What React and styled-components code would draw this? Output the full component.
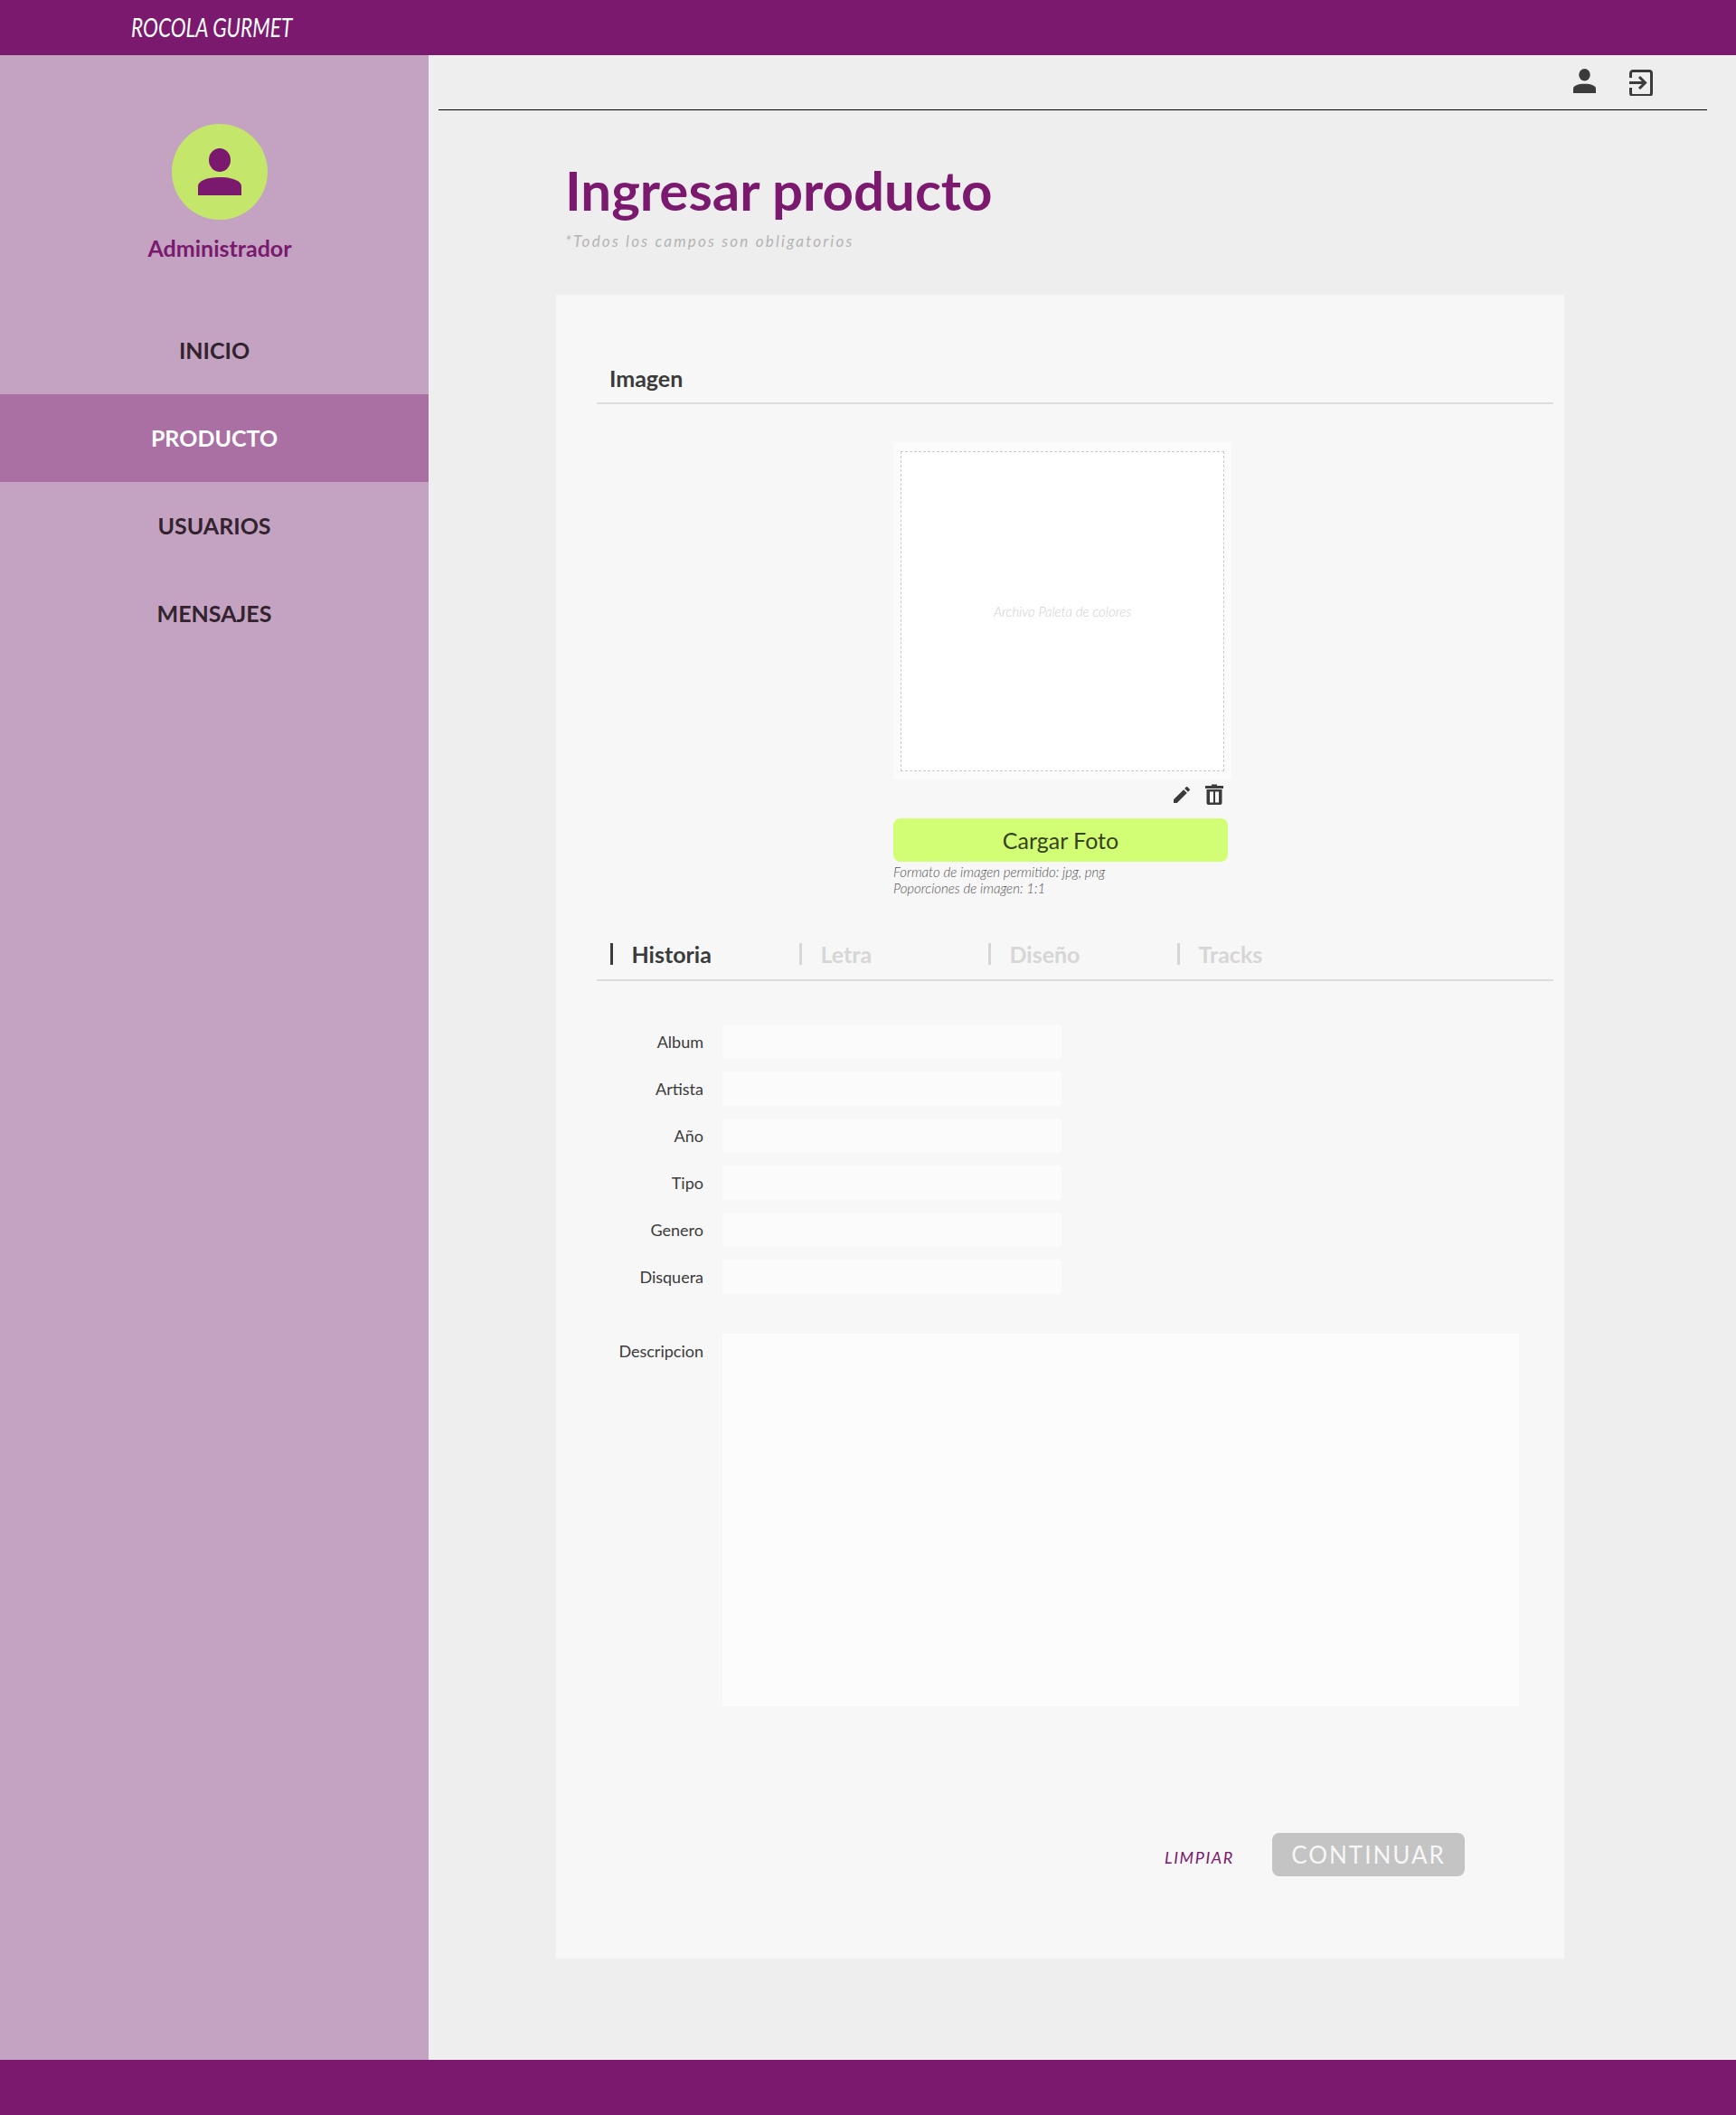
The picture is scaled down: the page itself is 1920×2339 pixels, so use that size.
import { MdEdit } from "react-icons/md";
import styled, { createGlobalStyle } from "styled-components";

const PURPLE = "#7a196e";
const DARK = "#3b3b3b";

const fields = ["Album", "Artista", "Año", "Tipo", "Genero", "Disquera"];
const tabs = ["Historia", "Letra", "Diseño", "Tracks"];
const menu = ["INICIO", "PRODUCTO", "USUARIOS", "MENSAJES"];

function PersonIcon({ size, color }) {
  return (
    <svg width={size} height={(size * 52) / 48} viewBox="0 0 48 52" fill={color}>
      <ellipse cx="24" cy="13" rx="12" ry="13" />
      <path d="M0 52V42C0 36 10 32 24 32s24 4 24 10v10z" />
    </svg>
  );
}

function ExitIcon() {
  return (
    <svg width="26" height="30" viewBox="0 0 26 30" fill="none" stroke={DARK} strokeWidth="3">
      <path d="M1.500 10V5a2.500 2.500 0 0 1 2.500-2.500h18A2.500 2.500 0 0 1 24.500 5v22a2.500 2.500 0 0 1-2.500 2.500H4A2.500 2.500 0 0 1 1.500 27v-6" />
      <path d="M0 15.500h17M11 9l6.500 6.500L11 22" />
    </svg>
  );
}

function TrashIcon() {
  return (
    <svg width="20" height="23" viewBox="0 0 20 23" fill={DARK}>
      <path d="M0 2h7V0.500h6V2h7v3H0z" />
      <path fillRule="evenodd" d="M1.500 6h17v15c0 1.200-.8 2-2 2h-13c-1.200 0-2-.8-2-2zm3.500 2.500v12h4v-12zm6 0v12h4v-12z" />
    </svg>
  );
}

export default function App() {
  return (
    <>
      <GlobalStyle />
      <Page>
        <Header>
          <Brand>ROCOLA GURMET</Brand>
        </Header>
        <Middle>
          <Sidebar>
            <Avatar>
              <PersonIcon size={48} color={PURPLE} />
            </Avatar>
            <Role>Administrador</Role>
            <Menu>
              {menu.map((item) => (
                <MenuItem key={item} $active={item === "PRODUCTO"}>
                  {item}
                </MenuItem>
              ))}
            </Menu>
          </Sidebar>
          <Main>
            <Toolbar>
              <PersonIcon size={25} color={DARK} />
              <ExitIcon />
            </Toolbar>
            <Title>Ingresar producto</Title>
            <Subtitle>*Todos los campos son obligatorios</Subtitle>
            <Card>
              <SectionTitle>Imagen</SectionTitle>
              <ImageColumn>
                <ImageFrame>
                  <DropZone>Archivo Paleta de colores</DropZone>
                </ImageFrame>
                <ImageActions>
                  <MdEdit size={24} color={DARK} />
                  <TrashIcon />
                </ImageActions>
                <UploadButton>Cargar Foto</UploadButton>
                <Hint>
                  Formato de imagen permitido: jpg, png
                  <br />
                  Poporciones de imagen: 1:1
                </Hint>
              </ImageColumn>
              <Tabs>
                {tabs.map((tab, idx) => (
                  <Tab key={tab} $active={idx === 0}>
                    {tab}
                  </Tab>
                ))}
              </Tabs>
              <Fields>
                {fields.map((field) => (
                  <FieldRow key={field}>
                    <FieldLabel>{field}</FieldLabel>
                    <Input />
                  </FieldRow>
                ))}
              </Fields>
              <AreaRow>
                <FieldLabel>Descripcion</FieldLabel>
                <Textarea />
              </AreaRow>
              <Actions>
                <ClearLink>LIMPIAR</ClearLink>
                <ContinueButton>CONTINUAR</ContinueButton>
              </Actions>
            </Card>
          </Main>
        </Middle>
        <Footer />
      </Page>
    </>
  );
}

const GlobalStyle = createGlobalStyle`
  * {
    box-sizing: border-box;
  }

  body {
    margin: 0;
    background: #eeeeee;
    font-family: Lato, "Liberation Sans", sans-serif;
  }
`;

const Page = styled.div`
  display: flex;
  flex-direction: column;
  height: 2339px;
`;

const Header = styled.header`
  height: 61px;
  padding: 0 0 2px 145px;
  display: flex;
  align-items: center;
  background: ${PURPLE};
`;

const Brand = styled.div`
  font-size: 29px;
  font-weight: 400;
  font-style: italic;
  color: #ffffff;
  transform: scaleX(0.78);
  transform-origin: left center;
  white-space: nowrap;
`;

const Middle = styled.div`
  flex: 1;
  display: flex;
  min-height: 0;
`;

const Sidebar = styled.aside`
  width: 474px;
  padding-top: 76px;
  display: flex;
  flex-direction: column;
  background: #c3a3c1;
`;

const Avatar = styled.div`
  width: 106px;
  height: 106px;
  margin-left: 190px;
  display: flex;
  align-items: center;
  justify-content: center;
  border-radius: 50%;
  background: #c4e66b;
`;

const Role = styled.div`
  margin-top: 16px;
  width: 486px;
  text-align: center;
  font-size: 25px;
  font-weight: 700;
  color: ${PURPLE};
`;

const Menu = styled.nav`
  margin-top: 50px;
  display: flex;
  flex-direction: column;
`;

const MenuItem = styled.div`
  height: 97px;
  padding-bottom: 1px;
  display: flex;
  align-items: center;
  justify-content: center;
  font-size: 25px;
  font-weight: 700;
  color: ${(props) => (props.$active ? "#ffffff" : "#33232f")};
  background: ${(props) => (props.$active ? "#aa6fa3" : "transparent")};
`;

const Main = styled.main`
  flex: 1;
  padding: 0 32px 0 11px;
`;

const Toolbar = styled.div`
  height: 61px;
  padding: 15px 60px 0 0;
  display: flex;
  align-items: flex-start;
  justify-content: flex-end;
  gap: 37px;
  border-bottom: 1px solid #000000;
`;

const Title = styled.h1`
  margin: 52px 0 0 140px;
  font-size: 60px;
  line-height: 72px;
  font-weight: 700;
  color: ${PURPLE};
`;

const Subtitle = styled.div`
  margin: 10px 0 0 140px;
  font-size: 17px;
  line-height: 22px;
  font-style: italic;
  letter-spacing: 2.22px;
  color: #b4b4b4;
`;

const Card = styled.section`
  width: 1115px;
  height: 1840px;
  margin: 48px 0 0 130px;
  padding: 72px 12px 0 45px;
  display: flex;
  flex-direction: column;
  background: #f7f7f7;
`;

const SectionTitle = styled.h2`
  margin: 0;
  height: 49px;
  padding: 5px 0 0 14px;
  font-size: 25px;
  line-height: 30px;
  font-weight: 700;
  color: ${DARK};
  border-bottom: 2px solid #dddddd;
`;

const ImageColumn = styled.div`
  width: 374px;
  margin: 42px 0 0 328px;
  display: flex;
  flex-direction: column;
`;

const ImageFrame = styled.div`
  height: 372px;
  padding: 10px 8px 8px;
  background: #fbfbfb;
`;

const DropZone = styled.div`
  height: 100%;
  display: flex;
  align-items: center;
  justify-content: center;
  background: #ffffff;
  border: 1px dashed #c8c8c8;
  font-size: 15px;
  font-weight: 300;
  font-style: italic;
  color: #cfcfcf;
`;

const ImageActions = styled.div`
  height: 44px;
  padding: 0 9px 9px 0;
  display: flex;
  align-items: center;
  justify-content: flex-end;
  gap: 14px;
`;

const UploadButton = styled.button`
  width: 370px;
  height: 48px;
  border: none;
  border-radius: 8px;
  font-family: inherit;
  font-size: 25px;
  color: #37421f;
  background: #d2fe76;
`;

const Hint = styled.div`
  margin-top: 2px;
  font-size: 15px;
  line-height: 18px;
  font-weight: 300;
  font-style: italic;
  color: #555555;
`;

const Tabs = styled.div`
  height: 47px;
  margin-top: 47px;
  display: flex;
  border-bottom: 2px solid #dddddd;
`;

const Tab = styled.div`
  width: 209px;
  height: 25px;
  margin-top: 4px;
  padding-left: 15px;
  display: flex;
  align-items: center;
  font-size: 25px;
  font-weight: 700;
  color: ${(props) => (props.$active ? DARK : "#d6d6d6")};

  &::before {
    content: "";
    width: 3px;
    height: 24px;
    margin-right: 20.500px;
    background: ${(props) => (props.$active ? DARK : "#d6d6d6")};
  }
`;

const Fields = styled.div`
  margin-top: 48px;
  display: flex;
  flex-direction: column;
  gap: 14px;
`;

const FieldRow = styled.div`
  display: flex;
  align-items: center;
  gap: 21px;
`;

const FieldLabel = styled.label`
  width: 118px;
  text-align: right;
  font-size: 18px;
  line-height: 38px;
  color: ${DARK};
`;

const Input = styled.div`
  width: 375px;
  height: 38px;
  border-radius: 2px;
  background: #fbfbfb;
`;

const AreaRow = styled.div`
  margin-top: 44px;
  display: flex;
  align-items: flex-start;
  gap: 21px;
`;

const Textarea = styled.div`
  width: 881px;
  height: 412px;
  background: #fcfcfc;
`;

const Actions = styled.div`
  margin-top: 140px;
  padding-left: 628px;
  display: flex;
  align-items: center;
  gap: 42px;
`;

const ClearLink = styled.a`
  width: 77px;
  padding-top: 6px;
  font-size: 18px;
  font-style: italic;
  letter-spacing: 1.6px;
  color: ${PURPLE};
  white-space: nowrap;
`;

const ContinueButton = styled.button`
  width: 213px;
  height: 48px;
  border: none;
  border-radius: 8px;
  font-family: inherit;
  font-size: 26px;
  letter-spacing: 2px;
  color: #f7f7f7;
  background: #c4c4c4;
`;

const Footer = styled.footer`
  height: 61px;
  background: ${PURPLE};
`;
